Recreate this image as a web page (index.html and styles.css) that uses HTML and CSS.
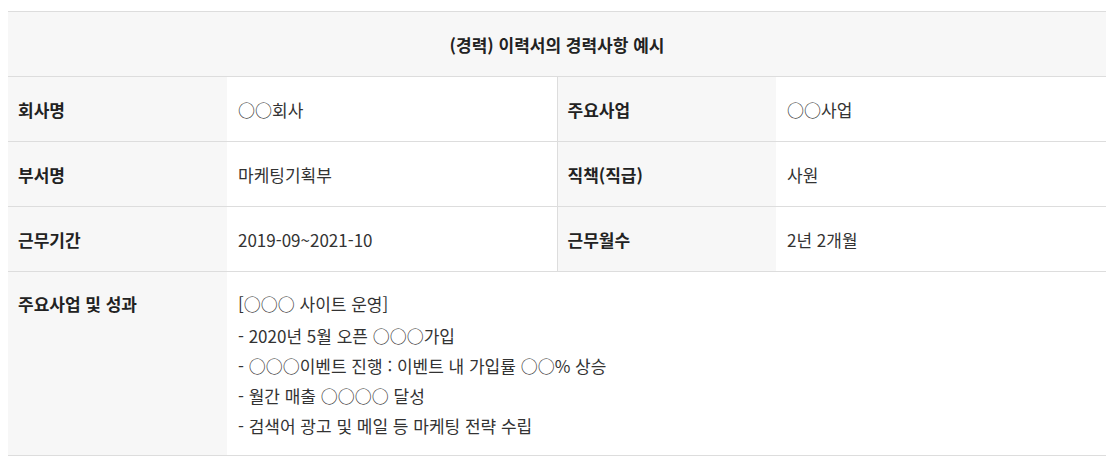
FILE: index.html
```html
<!DOCTYPE html>
<html lang="ko">
<head>
<meta charset="utf-8">
<link rel="stylesheet" href="styles.css">
</head>
<body>
<table class="career">
  <colgroup>
    <col class="c-label"><col class="c-value"><col class="c-label"><col class="c-value">
  </colgroup>
  <thead>
    <tr><th colspan="4" class="title">(경력) 이력서의 경력사항 예시</th></tr>
  </thead>
  <tbody>
    <tr>
      <th class="label">회사명</th><td class="value split">○○회사</td>
      <th class="label">주요사업</th><td class="value">○○사업</td>
    </tr>
    <tr>
      <th class="label">부서명</th><td class="value split">마케팅기획부</td>
      <th class="label">직책(직급)</th><td class="value">사원</td>
    </tr>
    <tr>
      <th class="label">근무기간</th><td class="value split">2019-09~2021-10</td>
      <th class="label">근무월수</th><td class="value">2년 2개월</td>
    </tr>
    <tr class="long">
      <th class="label">주요사업 및 성과</th>
      <td class="value" colspan="3">
        <p class="head">[○○○ 사이트 운영]</p>
        <p>- 2020년 5월 오픈 ○○○가입</p>
        <p>- ○○○이벤트 진행 : 이벤트 내 가입률 ○○% 상승</p>
        <p>- 월간 매출 ○○○○ 달성</p>
        <p>- 검색어 광고 및 메일 등 마케팅 전략 수립</p>
      </td>
    </tr>
  </tbody>
</table>
</body>
</html>
```

FILE: styles.css
```css
html, body {
  margin: 0;
  padding: 0;
  background: #fff;
}
body {
  padding: 11px 8px;
  font-family: "Noto Sans CJK KR", "Noto Sans", sans-serif;
  font-size: 17px;
  color: #333;
}
.career {
  width: 1098px;
  border-collapse: collapse;
  table-layout: fixed;
  border-top: 1px solid #ddd;
}
.c-label { width: 219px; }
.c-value { width: 330px; }
.career th, .career td {
  border-bottom: 1px solid #ddd;
  text-align: left;
  vertical-align: middle;
  height: 65px;
  padding: 0 10px;
  box-sizing: border-box;
}
.career .title {
  background: #f7f7f7;
  text-align: center;
  font-weight: 700;
  color: #222;
}
.career .label {
  background: #f7f7f7;
  font-weight: 700;
  color: #222;
}
.career .value {
  background: #fff;
  font-weight: 400;
  padding-left: 11px;
}
.career .split {
  border-right: 1px solid #ddd;
}
.long th, .long td {
  vertical-align: top;
  height: auto;
  padding-top: 17px;
  padding-bottom: 14px;
}
.long p {
  margin: 0;
  line-height: 30px;
}
.long p.head {
  margin-bottom: 2px;
}
.long .label {
  line-height: 30px;
}
```
